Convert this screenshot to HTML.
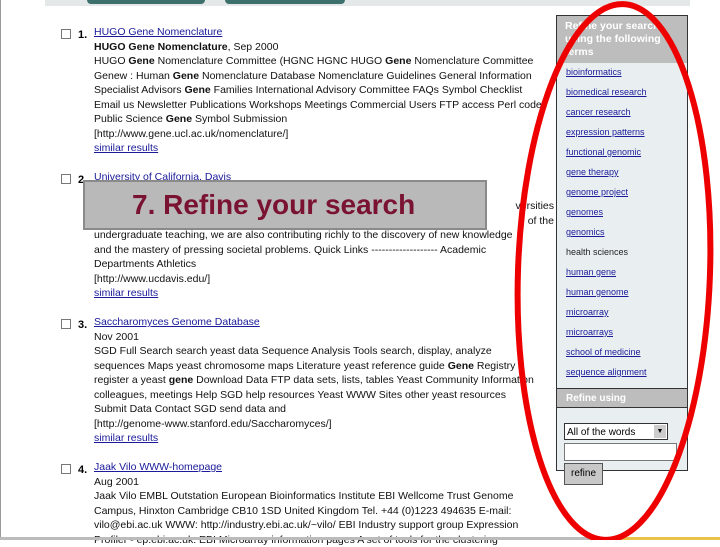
<!DOCTYPE html>
<html><head><style>
body{margin:0;width:720px;height:540px;overflow:hidden;background:#fff;font-family:"Liberation Sans",sans-serif;position:relative}
.top{position:absolute;left:45px;top:0;width:645px;height:6px;background:#e4e8e8}
.btn{position:absolute;top:0;height:4px;background:#3d6f6c;border-radius:0 0 4px 4px}
.res{position:absolute;left:94px;font-size:10.5px;line-height:14.5px;color:#111;width:460px}
.res a{color:#1a1a9a;text-decoration:underline}
.cb{position:absolute;left:61px;width:8px;height:8px;border:1px solid #777;background:#fff}
.num{position:absolute;left:78px;font-size:11px;font-weight:bold}
.side{position:absolute;left:556px;top:15px;width:130px;height:454px;background:#e9eff1;border:1px solid #333}
.sh{background:#bdbdbd;color:#fff;font-weight:bold;font-size:10.5px;line-height:13px;padding:4px 8px 0;height:43px}
.side a{position:absolute;left:9px;font-size:9px;color:#1a1a9a;text-decoration:underline}
.ov{position:absolute;left:83px;top:180px;background:#b9b9b9;border:2px solid #8a8a8a;color:#7a1232;font-weight:bold;font-size:28px;line-height:46px;padding-left:47px;box-sizing:border-box;width:404px;height:50px}
</style></head><body>
<div style="position:absolute;left:0;top:0;width:1px;height:540px;background:#999"></div>
<div class="top"></div>
<div class="btn" style="left:87px;width:118px"></div>
<div class="btn" style="left:225px;width:120px"></div>

<div class="cb" style="top:29px"></div><div class="num" style="top:29px">1.</div>
<div class="res" style="top:25px"><a>HUGO Gene Nomenclature</a><br><b>HUGO Gene Nomenclature</b>, Sep 2000<br>HUGO <b>Gene</b> Nomenclature Committee (HGNC HGNC HUGO <b>Gene</b> Nomenclature Committee<br>Genew : Human <b>Gene</b> Nomenclature Database Nomenclature Guidelines General Information<br>Specialist Advisors <b>Gene</b> Families International Advisory Committee FAQs Symbol Checklist<br>Email us Newsletter Publications Workshops Meetings Commercial Users FTP access Perl codes<br>Public Science <b>Gene</b> Symbol Submission<br>[http://www.gene.ucl.ac.uk/nomenclature/]<br><a>similar results</a></div>

<div class="cb" style="top:174px"></div><div class="num" style="top:174px">2.</div>
<div class="res" style="top:170px"><a>University of California, Davis</a><br>&nbsp;<br>&nbsp;<span style="float:right">versities</span><br>&nbsp;<span style="float:right">of the</span><br>undergraduate teaching, we are also contributing richly to the discovery of new knowledge<br>and the mastery of pressing societal problems. Quick Links ------------------- Academic<br>Departments Athletics<br>[http://www.ucdavis.edu/]<br><a>similar results</a></div>
<div class="ov">7. Refine your search</div>

<div class="cb" style="top:319px"></div><div class="num" style="top:319px">3.</div>
<div class="res" style="top:315px"><a>Saccharomyces Genome Database</a><br>Nov 2001<br>SGD Full Search search yeast data Sequence Analysis Tools search, display, analyze<br>sequences Maps yeast chromosome maps Literature yeast reference guide <b>Gene</b> Registry<br>register a yeast <b>gene</b> Download Data FTP data sets, lists, tables Yeast Community Information<br>colleagues, meetings Help SGD help resources Yeast WWW Sites other yeast resources<br>Submit Data Contact SGD send data and<br>[http://genome-www.stanford.edu/Saccharomyces/]<br><a>similar results</a></div>

<div class="cb" style="top:464px"></div><div class="num" style="top:464px">4.</div>
<div class="res" style="top:460px"><a>Jaak Vilo WWW-homepage</a><br>Aug 2001<br>Jaak Vilo EMBL Outstation European Bioinformatics Institute EBI Wellcome Trust Genome<br>Campus, Hinxton Cambridge CB10 1SD United Kingdom Tel. +44 (0)1223 494635 E-mail:<br>vilo@ebi.ac.uk WWW: http://industry.ebi.ac.uk/~vilo/ EBI Industry support group Expression<br>Profiler - ep.ebi.ac.uk: EBI Microarray information pages A set of tools for the clustering</div>

<div class="side">
<div class="sh">Refine your search using the following terms</div>
<a style="top:51px">bioinformatics</a><a style="top:71px">biomedical research</a><a style="top:91px">cancer research</a><a style="top:111px">expression patterns</a><a style="top:131px">functional genomic</a><a style="top:151px">gene therapy</a><a style="top:171px">genome project</a><a style="top:191px">genomes</a><a style="top:211px">genomics</a><a style="top:231px;color:#222;text-decoration:none">health sciences</a><a style="top:251px">human gene</a><a style="top:271px">human genome</a><a style="top:291px">microarray</a><a style="top:311px">microarrays</a><a style="top:331px">school of medicine</a><a style="top:351px">sequence alignment</a>
<div style="position:absolute;left:0;top:372px;width:130px;height:20px;background:#bdbdbd;border-top:1px solid #333;border-bottom:1px solid #333;color:#fff;font-weight:bold;font-size:10px;line-height:20px;padding-left:9px;box-sizing:border-box">Refine using</div>
<div style="position:absolute;left:7px;top:407px;width:104px;height:17px;background:#fff;border:1px solid #333;font-size:10px;line-height:17px;padding-left:2px;box-sizing:border-box">All of the words<span style="position:absolute;right:1px;top:1px;width:12px;height:13px;background:#ccc;font-size:7px;text-align:center;line-height:13px">▼</span></div>
<div style="position:absolute;left:7px;top:427px;width:113px;height:18px;background:#fff;border:1px solid #777;box-sizing:border-box"></div>
<div style="position:absolute;left:7px;top:447px;width:39px;height:22px;background:#c8c8c8;border:1px solid #555;font-size:10px;line-height:20px;text-align:center;box-sizing:border-box">refine</div>
</div>
<div style="position:absolute;left:0;top:537px;width:720px;height:3px;background:#bbb"></div>
<div style="position:absolute;left:590px;top:537px;width:130px;height:3px;background:#e8c24a"></div>
<svg style="position:absolute;left:0;top:0" width="720" height="540"><ellipse cx="614" cy="272" rx="96" ry="268" fill="none" stroke="#e00" stroke-width="6" transform="rotate(2 614 272)"/></svg>
</body></html>
